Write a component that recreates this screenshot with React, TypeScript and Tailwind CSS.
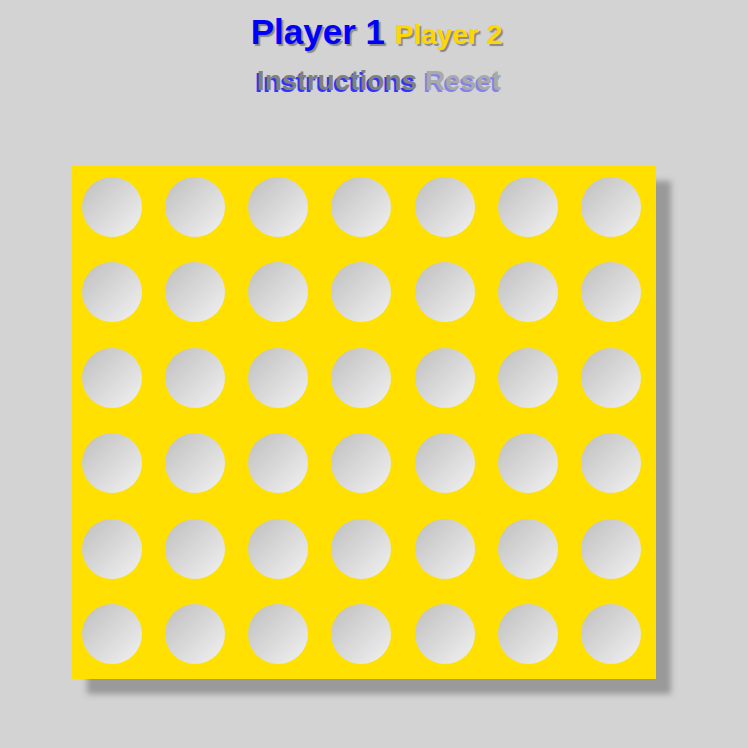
import React from "react";

export default function App() {
  const cells = Array.from({ length: 42 }, (_, i) => i);
  return (
    <div className="w-[748px] h-[748px] bg-[#d3d3d3] overflow-hidden" style={{ fontFamily: '"Liberation Sans", Arial, sans-serif' }}>
      <div className="flex flex-col items-center pt-[12px]">
        <div className="font-bold whitespace-pre leading-[40px] h-[40px] ml-[5px]">
          <span className="text-[35px] text-[#0000ff] [text-shadow:2px_2px_1px_#888]">Player 1</span>
          <span className="text-[28px] text-[#ffd700] [text-shadow:2px_2px_1px_#888] ml-[2px]"> Player 2</span>
        </div>
        <div className="font-bold whitespace-pre text-[28px] leading-[34px] mt-[12px] ml-[10px]">
          <span className="text-[#808080] [text-shadow:-2px_2px_0_#3333ff]">Instructions</span>
          <span> </span>
          <span className="text-[#808080] [text-shadow:-2px_2px_0_#3333ff] opacity-50">Reset</span>
        </div>
      </div>
      <div className="ml-[72px] mt-[68px] w-[584px] h-[513px] bg-[#ffe000] shadow-[15px_15px_6px_#999] grid grid-cols-[repeat(7,83.17px)] grid-rows-[repeat(6,85.4px)] pl-[10px] pt-[11px]">
        {cells.map((i) => (
          <div key={i}>
            <div className="w-[60px] h-[60px] rounded-full bg-gradient-to-br from-[#bfbfbf] to-[#f2f2f2]" />
          </div>
        ))}
      </div>
    </div>
  );
}
